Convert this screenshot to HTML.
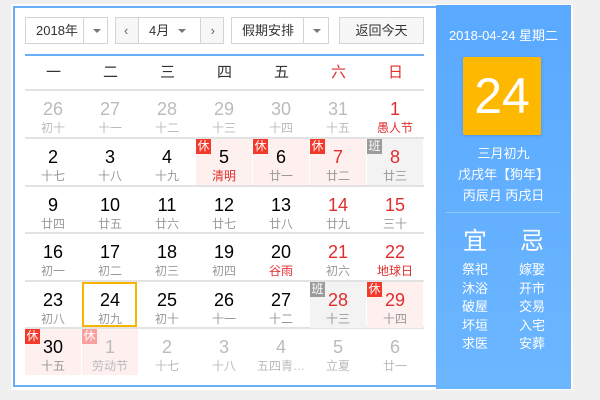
<!DOCTYPE html>
<html><head><meta charset="utf-8"><style>
*{margin:0;padding:0;box-sizing:border-box}
body{width:600px;height:400px;background:#f0f0f0;font-family:"Liberation Sans","Noto Sans CJK SC",sans-serif;position:relative;overflow:hidden}
.wrap{position:absolute;left:11px;top:4px;width:562px;height:386px;background:#fff}
.left{position:absolute;left:13px;top:6px;width:423px;height:381px;border:2px solid #6aaef8;border-right:none;background:#fff}
.sel{position:absolute;top:17px;height:27px;border:1px solid #d4d4d4;background:#fff;font-size:13px;color:#333;line-height:25px}
.arr{position:absolute;top:0;height:25px;border-left:1px solid #d4d4d4;width:25px}
.arr:after{content:"";position:absolute;left:9px;top:11px;border:4px solid transparent;border-top:4px solid #777}
.btn{background:#f7f7f7}
.hline{position:absolute;left:25px;top:54px;width:399px;height:2px;background:#6aaef8}
.wk{position:absolute;top:56px;height:34px;width:57px;text-align:center;font-size:15px;line-height:34px;color:#333}
.cell{position:absolute;width:56px;height:46px;text-align:center}
.n{position:absolute;left:0;right:0;top:7px;font-size:18px;line-height:22px;color:#000}
.l{position:absolute;left:0;right:0;top:30px;font-size:12px;line-height:14px;color:#999}
.g .n,.g .l{color:#bbb}
.r{color:#e02d2d!important}
.hol{background:#fff0f0}
.ban{background:#f3f3f3}
.bx{position:absolute;left:0;top:0;width:15px;height:15px;font-size:12px;line-height:15px;color:#fff;background:#f23a2c;text-align:center}
.ban .bx{background:#9b9b9b}
.fade .bx{background:#f8a0a0}
.rl{position:absolute;top:89px;left:25px;width:399px;height:2px;background:#e2e2e2}
.right{position:absolute;left:436px;top:5px;width:135px;height:384px;background:linear-gradient(#59a9ff,#6cb6ff);color:#fff;text-align:center}
</style></head><body>
<div class="wrap"></div>
<div class="left"></div>
<div class="sel" style="left:25px;width:83px"><span style="padding-left:10px">2018年</span><div class="arr" style="left:57px"></div></div>
<div class="sel btn" style="left:115px;width:109px"><span style="position:absolute;left:8px;color:#666">&lsaquo;</span><div style="position:absolute;left:22px;top:0;width:63px;height:25px;background:#fff;border-left:1px solid #d4d4d4;border-right:1px solid #d4d4d4;padding-left:10px">4月<div class="arr" style="left:30px;border:none"></div></div><span style="position:absolute;right:8px;color:#666">&rsaquo;</span></div>
<div class="sel" style="left:231px;width:98px"><span style="padding-left:10px">假期安排</span><div class="arr" style="left:71px"></div></div>
<div class="sel btn" style="left:339px;width:85px;text-align:center">返回今天</div>
<div class="hline"></div>
<div class="wk" style="left:25px">一</div><div class="wk" style="left:82px">二</div><div class="wk" style="left:139px">三</div><div class="wk" style="left:196px">四</div><div class="wk" style="left:253px">五</div><div class="wk r" style="left:310px">六</div><div class="wk r" style="left:367px">日</div>
<div class="rl"></div>
<div class="rl" style="top:137px"></div><div class="rl" style="top:185px"></div><div class="rl" style="top:232px"></div><div class="rl" style="top:280px"></div><div class="rl" style="top:327px"></div>
<div id="g"></div>
<div class="cell" style="left:82px;top:282px;border:2px solid #f7b500;width:55px;height:45px"></div>
<div class="right">
<div style="position:absolute;top:20px;width:100%;font-size:13px">2018-04-24 星期二</div>
<div style="position:absolute;left:27px;top:52px;width:78px;height:78px;background:#ffb800;border-radius:2px;font-size:50px;line-height:78px;box-shadow:0 1px 3px rgba(0,0,0,.15)">24</div>
<div style="position:absolute;top:138px;width:100%;font-size:13px;line-height:21px">三月初九<br>戊戌年【狗年】<br>丙辰月 丙戌日</div>
<div style="position:absolute;left:10px;top:207px;width:114px;height:1px;background:#94c9ff"></div>
<div style="position:absolute;left:14px;top:222px;width:50px;font-size:24px;line-height:30px">宜</div>
<div style="position:absolute;left:71px;top:222px;width:50px;font-size:24px;line-height:30px">忌</div>
<div style="position:absolute;left:14px;top:256px;width:50px;font-size:13px;line-height:18.5px">祭祀<br>沐浴<br>破屋<br>坏垣<br>求医</div>
<div style="position:absolute;left:71px;top:256px;width:50px;font-size:13px;line-height:18.5px">嫁娶<br>开市<br>交易<br>入宅<br>安葬</div>
</div>
<script>
var d=[
["26","初十","g"],["27","十一","g"],["28","十二","g"],["29","十三","g"],["30","十四","g"],["31","十五","g"],["1","愚人节","g rn rl2"],
["2","十七"],["3","十八"],["4","十九"],["5","清明","hol lr","休"],["6","廿一","hol","休"],["7","廿二","hol rn","休"],["8","廿三","ban rn","班"],
["9","廿四"],["10","廿五"],["11","廿六"],["12","廿七"],["13","廿八"],["14","廿九","rn"],["15","三十","rn"],
["16","初一"],["17","初二"],["18","初三"],["19","初四"],["20","谷雨","lr"],["21","初六","rn"],["22","地球日","rn lr"],
["23","初八"],["24","初九"],["25","初十"],["26","十一"],["27","十二"],["28","十三","ban rn","班"],["29","十四","hol rn","休"],
["30","十五","hol","休"],["1","劳动节","g hol fade","休"],["2","十七","g"],["3","十八","g"],["4","五四青…","g"],["5","立夏","g"],["6","廿一","g"]];
var tops=[91,139,187,234,282,329],h="";
d.forEach(function(c,i){var r=Math.floor(i/7),k=i%7,cl=c[2]||"";
var nc=cl.indexOf("rn")>=0?"n r":"n",lc=cl.indexOf("lr")>=0?"l r":"l";
var st="";if(cl.indexOf("g")>=0&&cl.indexOf("rn")>=0)st=' style="color:#e02d2d"';
h+='<div class="cell '+cl+'" style="left:'+(25+k*57)+'px;top:'+tops[r]+'px">'+(c[3]?'<div class="bx">'+c[3]+'</div>':'')+'<div class="'+nc+'"'+st+'>'+c[0]+'</div><div class="'+lc+'"'+st+'>'+c[1]+'</div></div>';});
document.getElementById("g").innerHTML=h;
</script>
</body></html>
